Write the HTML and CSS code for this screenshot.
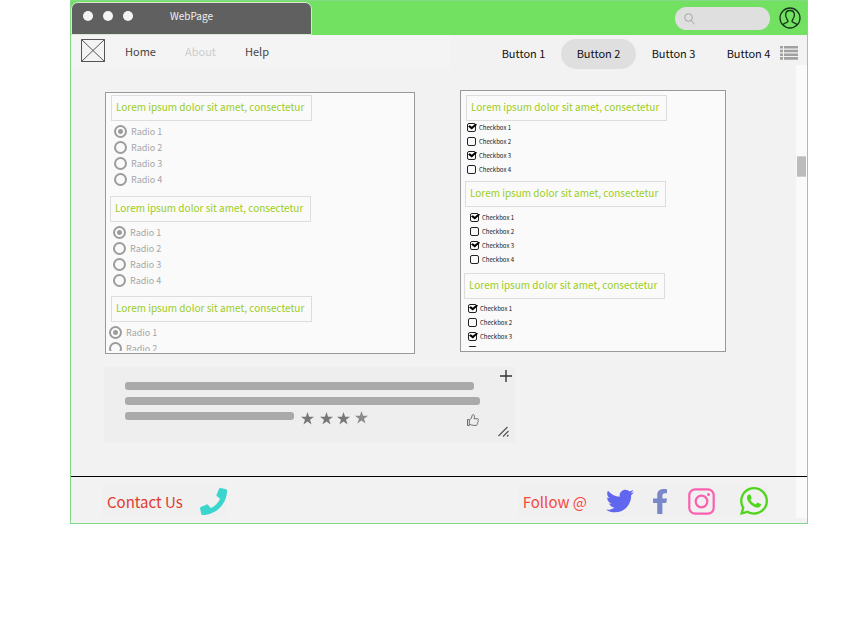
FILE: index.html
```html
<!DOCTYPE html>
<html lang="en">
<head>
<meta charset="utf-8">
<title>WebPage</title>
<link rel="stylesheet" href="styles.css">
</head>
<body>
<div class="window">
  <header class="titlebar">
    <div class="tab">
      <span class="dot"></span><span class="dot"></span><span class="dot"></span>
      <span class="tab-title">WebPage</span>
    </div>
    <label class="search">
      <svg width="11" height="12" viewBox="0 0 11 12" fill="none" stroke="#a4a4a4"><circle cx="4.5" cy="4.5" r="3.8"/><path d="M7.2 7.5l3.3 3.8"/></svg>
      <input type="search" aria-label="Search">
    </label>
    <button class="icon-button" aria-label="Account">
      <svg width="22" height="22" viewBox="0 0 22 22" fill="none" stroke="#17361a" stroke-width="1.3"><circle cx="11" cy="11" r="10"/><path d="M4 18c.5-2.200 4.800-2.500 5-3.500.2-1.200-2.400-3-2.400-6.500 0-2.800 1.800-4.500 4.400-4.500s4.400 1.700 4.400 4.500c0 3.500-2.600 5.300-2.400 6.500.2 1 4.500 1.300 5 3.500"/></svg>
    </button>
  </header>

  <nav class="nav">
    <div class="menu">
      <svg class="logo" width="24" height="23" viewBox="0 0 24 23" fill="none" stroke="#555"><path d="M.5.5h23v22H.5zM.5.5l23 22M23.500.5L.5 22.500"/></svg>
      <a href="#">Home</a><a href="#" class="muted">About</a><a href="#">Help</a>
    </div>
    <div class="buttons">
      <button>Button 1</button><button class="active">Button 2</button><button>Button 3</button><button>Button 4</button>
      <button class="list-button" aria-label="List">
        <svg width="18" height="14" viewBox="0 0 18 14" fill="#a0a0a0"><path d="M0 0h3v2.600H0zM4 0h14v2.600H4zM0 3.700h3v2.600H0zM4 3.700h14v2.600H4zM0 7.400h3V10H0zM4 7.400h14V10H4zM0 11.100h3v2.600H0zM4 11.100h14v2.600H4z"/></svg>
      </button>
    </div>
  </nav>

  <main class="content">
    <div class="panels">
      <section class="panel radios">
        <div class="scroll">
          <fieldset>
            <legend>Lorem ipsum dolor sit amet, consectetur</legend>
            <label><input type="radio" name="a" checked>Radio 1</label>
            <label><input type="radio" name="a">Radio 2</label>
            <label><input type="radio" name="a">Radio 3</label>
            <label><input type="radio" name="a">Radio 4</label>
          </fieldset>
          <fieldset>
            <legend>Lorem ipsum dolor sit amet, consectetur</legend>
            <label><input type="radio" name="b" checked>Radio 1</label>
            <label><input type="radio" name="b">Radio 2</label>
            <label><input type="radio" name="b">Radio 3</label>
            <label><input type="radio" name="b">Radio 4</label>
          </fieldset>
          <fieldset>
            <legend>Lorem ipsum dolor sit amet, consectetur</legend>
            <label><input type="radio" name="c" checked>Radio 1</label>
            <label><input type="radio" name="c">Radio 2</label>
          </fieldset>
        </div>
      </section>
      <section class="panel checks">
        <div class="scroll">
          <fieldset>
            <legend>Lorem ipsum dolor sit amet, consectetur</legend>
            <label><input type="checkbox" checked>Checkbox 1</label>
            <label><input type="checkbox">Checkbox 2</label>
            <label><input type="checkbox" checked>Checkbox 3</label>
            <label><input type="checkbox">Checkbox 4</label>
          </fieldset>
          <fieldset>
            <legend>Lorem ipsum dolor sit amet, consectetur</legend>
            <label><input type="checkbox" checked>Checkbox 1</label>
            <label><input type="checkbox">Checkbox 2</label>
            <label><input type="checkbox" checked>Checkbox 3</label>
            <label><input type="checkbox">Checkbox 4</label>
          </fieldset>
          <fieldset>
            <legend>Lorem ipsum dolor sit amet, consectetur</legend>
            <label><input type="checkbox" checked>Checkbox 1</label>
            <label><input type="checkbox">Checkbox 2</label>
            <label><input type="checkbox" checked>Checkbox 3</label>
            <label><input type="checkbox" aria-label="Checkbox 4"></label>
          </fieldset>
        </div>
      </section>
    </div>

    <article class="card">
      <div class="lines">
        <div class="line"></div>
        <div class="line long"></div>
        <div class="rating">
          <div class="line"></div>
          <svg width="68" height="14" viewBox="0 0 68 14" fill="#777">
            <defs><path id="star" d="M6.500 0L8.100 4.800H13L9 7.800 10.600 12.500 6.500 9.600 2.400 12.500 4 7.800 0 4.800H4.900z"/></defs>
            <use href="#star"/><use href="#star" x="19"/><use href="#star" x="36"/><use href="#star" x="54" y="-1" fill="#8a8a8a"/>
          </svg>
        </div>
      </div>
      <div class="actions">
        <button class="icon-button add" aria-label="Add">
          <svg width="12" height="12" viewBox="0 0 12 12" stroke="#333" stroke-width="1.400"><path d="M6 0v12M0 6h12"/></svg>
        </button>
        <button class="icon-button like" aria-label="Like">
          <svg width="12" height="12" viewBox="0 0 12 12" fill="none" stroke="#6c6c6c"><path d="M.5 5.500h1.800v6H.5zM2.500 6C4 5 4.800 3.500 5 1.800 5.100.2 7.500.2 7.500 2.200c0 1.200-.5 1.800-.5 2.500h3.600c1 0 1.200 1.300.4 1.800.5.6.3 1.300-.3 1.700.3.700 0 1.300-.5 1.500.2.900-.3 1.700-1.300 1.700H6.500c-1.700 0-2.500-.9-4-.9"/></svg>
        </button>
        <svg class="grip" width="11" height="11" viewBox="0 0 11 11" stroke="#555" stroke-width="1.200"><path d="M.5 10L9.500 1M5 10.500L10.500 5M9 10.500l1.500-1.500"/></svg>
      </div>
    </article>
  </main>

  <footer class="footer">
    <div class="contact">
      <span>Contact Us</span>
      <a href="#" aria-label="Phone"><svg width="27" height="27" viewBox="0 0 512 512" fill="#3ad6cd"><path d="M493.400 24.600l-104-24c-11.300-2.600-22.900 3.300-27.500 13.900l-48 112c-4.200 9.800-1.400 21.300 6.900 28l60.600 49.600c-36 76.700-98.900 140.500-177.200 177.200l-49.600-60.600c-6.800-8.300-18.200-11.100-28-6.900l-112 48C3.900 366.500-2 378.100.6 389.400l24 104C27.100 504.200 36.700 512 48 512c256.100 0 464-207.500 464-464 0-11.200-7.700-20.900-18.600-23.400z"/></svg></a>
    </div>
    <div class="follow">
      <span>Follow @</span>
      <a href="#" aria-label="Twitter"><svg width="28" height="28" viewBox="0 0 512 512" fill="#6166ee"><path d="M459.370 151.716c.325 4.548.325 9.097.325 13.645 0 138.720-105.583 298.558-298.558 298.558-59.452 0-114.680-17.219-161.137-47.106 8.447.974 16.568 1.299 25.340 1.299 49.055 0 94.213-16.568 130.274-44.832-46.132-.975-84.792-31.188-98.112-72.772 6.498.974 12.995 1.624 19.818 1.624 9.421 0 18.843-1.300 27.614-3.573-48.081-9.747-84.143-51.980-84.143-102.985v-1.299c13.969 7.797 30.214 12.670 47.431 13.319-28.264-18.843-46.781-51.005-46.781-87.391 0-19.492 5.197-37.360 14.294-52.954 51.655 63.675 129.300 105.258 216.365 109.807-1.624-7.797-2.599-15.918-2.599-24.040 0-57.828 46.782-104.934 104.934-104.934 30.213 0 57.502 12.670 76.670 33.137 23.715-4.548 46.456-13.320 66.599-25.340-7.798 24.366-24.366 44.833-46.132 57.827 21.117-2.273 41.584-8.122 60.426-16.243-14.292 20.791-32.161 39.308-52.628 54.253z"/></svg></a>
      <a href="#" class="facebook" aria-label="Facebook"><svg width="14" height="25" viewBox="22 0 272 512" preserveAspectRatio="none" fill="#7886ca"><path d="M279.140 288l14.220-92.660h-88.910v-60.130c0-25.350 12.420-50.060 52.240-50.060h40.420V6.260S260.430 0 225.360 0c-73.220 0-121.080 44.380-121.080 124.720v70.620H22.890V288h81.390v224h100.170V288z"/></svg></a>
      <a href="#" class="instagram" aria-label="Instagram"><svg width="27" height="27" viewBox="0 0 27 27" fill="none" stroke="#fa60b0" stroke-width="2.200"><rect x="1.300" y="1.300" width="24.400" height="24.400" rx="6"/><circle cx="13.500" cy="13.500" r="5.800"/><circle cx="20.500" cy="6.500" r="1.500" fill="#fa60b0" stroke="none"/></svg></a>
      <a href="#" class="whatsapp" aria-label="WhatsApp"><svg width="28" height="28" viewBox="0 32 448 448" fill="#50d51c"><path d="M380.900 97.100C339 55.100 283.200 32 223.900 32c-122.400 0-222 99.600-222 222 0 39.100 10.200 77.300 29.600 111L0 480l117.700-30.900c32.400 17.700 68.900 27 106.100 27h.1c122.300 0 224.100-99.600 224.100-222 0-59.300-25.200-115-67.100-157zm-157 341.600c-33.200 0-65.700-8.900-94-25.700l-6.700-4-69.800 18.300L72 359.200l-4.400-7c-18.500-29.400-28.200-63.300-28.200-98.200 0-101.700 82.800-184.500 184.600-184.500 49.300 0 95.600 19.200 130.400 54.100 34.800 34.900 56.200 81.200 56.100 130.500 0 101.800-84.900 184.600-186.600 184.600zm101.200-138.200c-5.500-2.800-32.800-16.200-37.900-18-5.100-1.900-8.800-2.800-12.500 2.800-3.700 5.600-14.300 18-17.600 21.800-3.200 3.700-6.500 4.200-12 1.400-32.600-16.300-54-29.100-75.500-66-5.700-9.800 5.700-9.100 16.300-30.300 1.800-3.700.9-6.900-.5-9.700-1.400-2.800-12.500-30.100-17.100-41.200-4.500-10.800-9.100-9.300-12.500-9.500-3.200-.2-6.900-.2-10.600-.2-3.700 0-9.700 1.400-14.800 6.900-5.100 5.600-19.400 19-19.400 46.300 0 27.300 19.900 53.700 22.600 57.400 2.800 3.700 39.100 59.700 94.800 83.800 35.200 15.200 49 16.500 66.600 13.900 10.700-1.600 32.800-13.400 37.400-26.400 4.600-13 4.600-24.100 3.200-26.400-1.300-2.500-5-3.900-10.500-6.600z"/></svg></a>
    </div>
  </footer>
  <div class="scrollbar"><div class="thumb"></div></div>
</div>
</body>
</html>
```

FILE: styles.css
```css
* { box-sizing: border-box; }
body {
  margin: 0;
  background: #fff;
  font-family: "Noto Sans CJK SC", "Noto Sans", sans-serif;
  font-size: 11px;
  color: #333;
}
svg { display: block; }
button {
  margin: 0;
  padding: 0;
  border: 0;
  background: none;
  font: inherit;
  color: inherit;
}
a { color: inherit; text-decoration: none; }

.window {
  position: relative;
  margin: 0 52px 0 70px;
  border: 1px solid #84d987;
  background: #f2f2f2;
}

.titlebar {
  display: flex;
  align-items: center;
  height: 34px;
  padding-right: 6px;
  background: #72e162;
}
.tab {
  display: flex;
  align-items: center;
  gap: 10px;
  width: 241px;
  height: 33px;
  margin-right: auto;
  padding-left: 11px;
  padding-bottom: 5px;
  border: 1px solid #d5e8d3;
  border-radius: 7px 7px 0 0;
  background: #606060;
}
.dot { width: 10px; height: 10px; border-radius: 50%; background: #f4f4f4; }
.tab-title { margin-left: 27px; font-size: 10px; color: #f0f0f0; }
.search {
  display: flex;
  align-items: center;
  width: 95px;
  height: 23px;
  margin-right: 9px;
  padding: 1px 9px 0;
  border-radius: 12px;
  background: #dfdfdf;
}
.search input {
  flex: 1;
  min-width: 0;
  border: 0;
  outline: 0;
  background: none;
  font: inherit;
}

.nav {
  display: flex;
  justify-content: space-between;
  align-items: flex-start;
  padding-right: 9px;
}
.menu {
  display: flex;
  align-items: center;
  width: 379px;
  height: 33px;
  padding-left: 10px;
  padding-bottom: 2px;
  background: #f4f4f4;
  color: #444;
}
.logo { margin-right: 20px; }
.menu a { width: 60px; }
.menu .muted { color: #ccc; }
.buttons { display: flex; padding-top: 4px; color: #111; }
.buttons button { width: 75px; height: 30px; padding-bottom: 2px; border-radius: 15px; }
.buttons .active { background: #dfdfdf; }
.buttons .list-button { width: 18px; margin-left: -6px; }

.content { padding: 21px 70px 33px 33px; }
.panels { display: flex; align-items: flex-start; gap: 45px; padding-left: 1px; }
.panel { border: 1px solid #999; background: #fafafa; }
.radios { flex: 0 1 310px; margin-top: 2px; padding: 2px 3px; }
.checks { flex: 0 1 266px; padding: 4px 3px; }
.scroll { overflow: hidden; }
.radios .scroll { height: 256px; padding-left: 1px; }
.checks .scroll { height: 252px; }

fieldset { min-width: 0; margin: 0; padding: 0; border: 0; }
legend {
  width: 201px;
  max-width: 100%;
  height: 26px;
  padding: 0 4px;
  border: 1px solid #ddd;
  font-size: 10px;
  line-height: 22px;
  white-space: nowrap;
  color: #9acd19;
}
label { display: flex; align-items: center; }
input[type="radio"], input[type="checkbox"] {
  appearance: none;
  flex: none;
  margin: 0;
}
.radios legend { margin-left: 1px; }
.radios fieldset { height: 101px; padding-top: 2px; }
.radios label { height: 16px; gap: 4px; margin-left: 4px; font-size: 9px; color: #a6a6a6; }
.radios fieldset:nth-child(2) { height: 100px; }
.radios fieldset:nth-child(2) legend { margin-left: 0; }
.radios fieldset:nth-child(2) label { margin-left: 3px; }
.radios fieldset:nth-child(3) label { margin-left: -1px; }
input[type="radio"] {
  width: 13px;
  height: 13px;
  border: 2px solid #9c9c9c;
  border-radius: 50%;
}
input[type="radio"]:checked {
  background: radial-gradient(circle, #9c9c9c 2px, transparent 3px);
}

.checks legend { margin-left: 1px; }
.checks fieldset { height: 86px; }
.checks label { height: 14px; gap: 3px; margin-left: 3px; font-size: 6px; color: #111; }
.checks fieldset:nth-child(1) legend { margin-left: 2px; margin-bottom: -1px; }
.checks fieldset:nth-child(2) { height: 92px; }
.checks fieldset:nth-child(2) legend { margin-bottom: 3px; }
.checks fieldset:nth-child(2) label { margin-left: 6px; }
.checks fieldset:nth-child(3) legend { margin-left: 0; margin-bottom: 2px; }
.checks fieldset:nth-child(3) label { margin-left: 4px; }
input[type="checkbox"] {
  position: relative;
  width: 9px;
  height: 9px;
  border: 1px solid #222;
  border-radius: 2px;
}
input[type="checkbox"]:checked::before {
  content: "";
  position: absolute;
  inset: 0 -2px 1px 0;
  background: #000;
  clip-path: polygon(0 50%, 20% 30%, 42% 55%, 85% 0, 100% 20%, 42% 100%);
}

.card {
  display: flex;
  justify-content: space-between;
  width: 411px;
  max-width: 100%;
  margin-top: 13px;
  padding: 3px 3px 6px 21px;
  background: #eee;
}
.lines { display: flex; flex-direction: column; gap: 7px; padding-top: 12px; }
.line { width: 349px; height: 8px; border-radius: 3px; background: #aaa; }
.line.long { width: 355px; }
.rating { display: flex; gap: 7px; }
.rating .line { width: 169px; }
.rating svg { overflow: visible; }
.actions { display: flex; flex-direction: column; width: 12px; }
.actions .like { align-self: flex-start; margin: 32px 0 0 -33px; }
.grip { margin-left: -2px; }

.footer {
  position: relative;
  z-index: 1;
  display: flex;
  justify-content: space-between;
  padding: 8px 39px 6px 31px;
  border-top: 1px solid #000;
  font-size: 15px;
}
.contact, .follow {
  display: flex;
  align-items: center;
  height: 32px;
  background: #f0f0f0;
}
.contact { gap: 17px; padding-left: 5px; color: #e03a2e; }
.follow { gap: 19px; padding-left: 5px; color: #f44a3e; }
.instagram { margin-left: 2px; }
.whatsapp { margin-left: 6px; }

.scrollbar {
  position: absolute;
  top: 64px;
  right: 0;
  bottom: 5px;
  width: 11px;
  padding: 91px 1px 0;
  background: rgba(255, 255, 255, 0.6);
}
.thumb { height: 21px; border: solid #d0d0d0; border-width: 1px 0; background: #bcbcbc; }
```
